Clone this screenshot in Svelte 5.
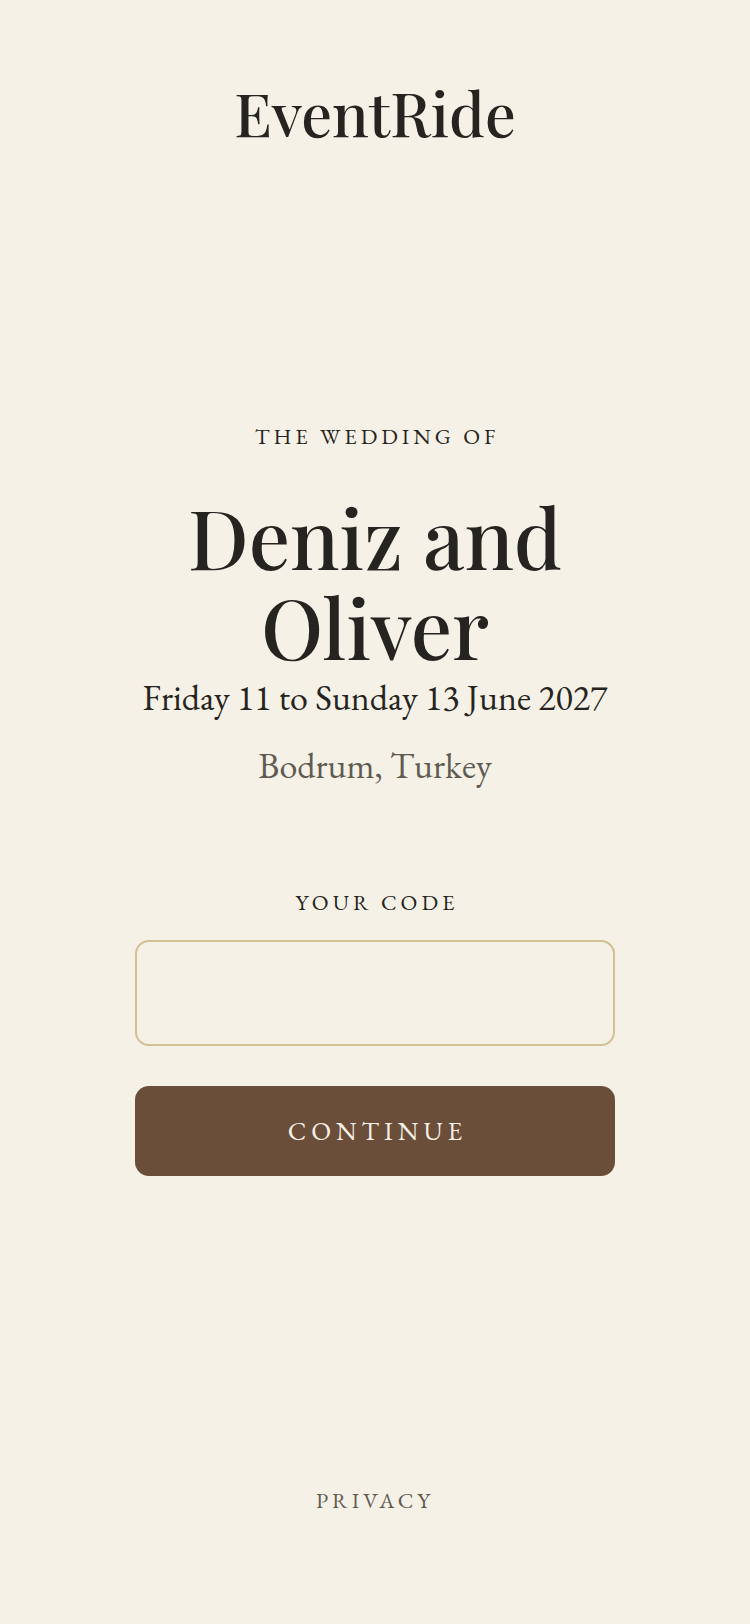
<script>
  let code = $state('');

  const submitCode = (e) => {
    e.preventDefault();
    code = code.trim();
  };
</script>

<div class="page">
  <header>EventRide</header>

  <main>
    <p class="label">The wedding of</p>
    <h1>Deniz and Oliver</h1>
    <p class="date">Friday 11 to Sunday 13 June 2027</p>
    <p class="place">Bodrum, Turkey</p>

    <form onsubmit={submitCode}>
      <label class="label" for="code">Your code</label>
      <input id="code" type="text" autocomplete="off" bind:value={code} />
      <button type="submit">Continue</button>
    </form>
  </main>

  <footer>
    <a href="/privacy">Privacy</a>
  </footer>
</div>

<style>
  :global(body) {
    margin: 0;
    background: #f6f1e6;
  }

  .page {
    box-sizing: border-box;
    min-height: 100vh;
    display: flex;
    flex-direction: column;
    padding: 68px 135px 107px;
    background: #f6f1e6;
    color: #252420;
    font-family: "EB Garamond", "Liberation Serif", serif;
    text-align: center;
  }

  header {
    font-family: "Playfair Display", "Liberation Serif", serif;
    font-size: 61px;
    line-height: 88px;
    font-weight: 500;
  }

  main {
    flex: 1;
    display: flex;
    flex-direction: column;
    justify-content: center;
    padding-bottom: 44px;
  }

  p {
    margin: 0;
  }

  .label,
  footer a {
    font-size: 22px;
    line-height: 32px;
    letter-spacing: 4px;
    text-transform: uppercase;
  }

  /* balances the tracking after the last letter */
  .label {
    text-indent: 4px;
  }

  h1 {
    margin: 38px 0 0;
    font-family: "Playfair Display", "Liberation Serif", serif;
    font-size: 82px;
    line-height: 90px;
    font-weight: 500;
  }

  .date,
  .place {
    font-size: 36px;
    line-height: 52px;
  }

  .date {
    margin-top: 1px;
  }

  .place {
    margin-top: 16px;
    color: #5f5b52;
  }

  form {
    display: flex;
    flex-direction: column;
    margin-top: 95px;
  }

  input {
    box-sizing: border-box;
    width: 100%;
    height: 106px;
    margin: 21px 0 40px;
    padding: 0 32px;
    border: 2px solid #d2bf94;
    border-radius: 14px;
    background: transparent;
    color: inherit;
    font: inherit;
    font-size: 36px;
    text-align: center;
  }

  button {
    height: 90px;
    border: none;
    border-radius: 14px;
    background: #6b4e39;
    color: #f6f1e6;
    font: inherit;
    font-size: 26px;
    letter-spacing: 5px;
    text-indent: 5px;
    text-transform: uppercase;
    cursor: pointer;
  }

  footer a {
    color: #5f5b52;
    text-decoration: none;
  }
</style>
